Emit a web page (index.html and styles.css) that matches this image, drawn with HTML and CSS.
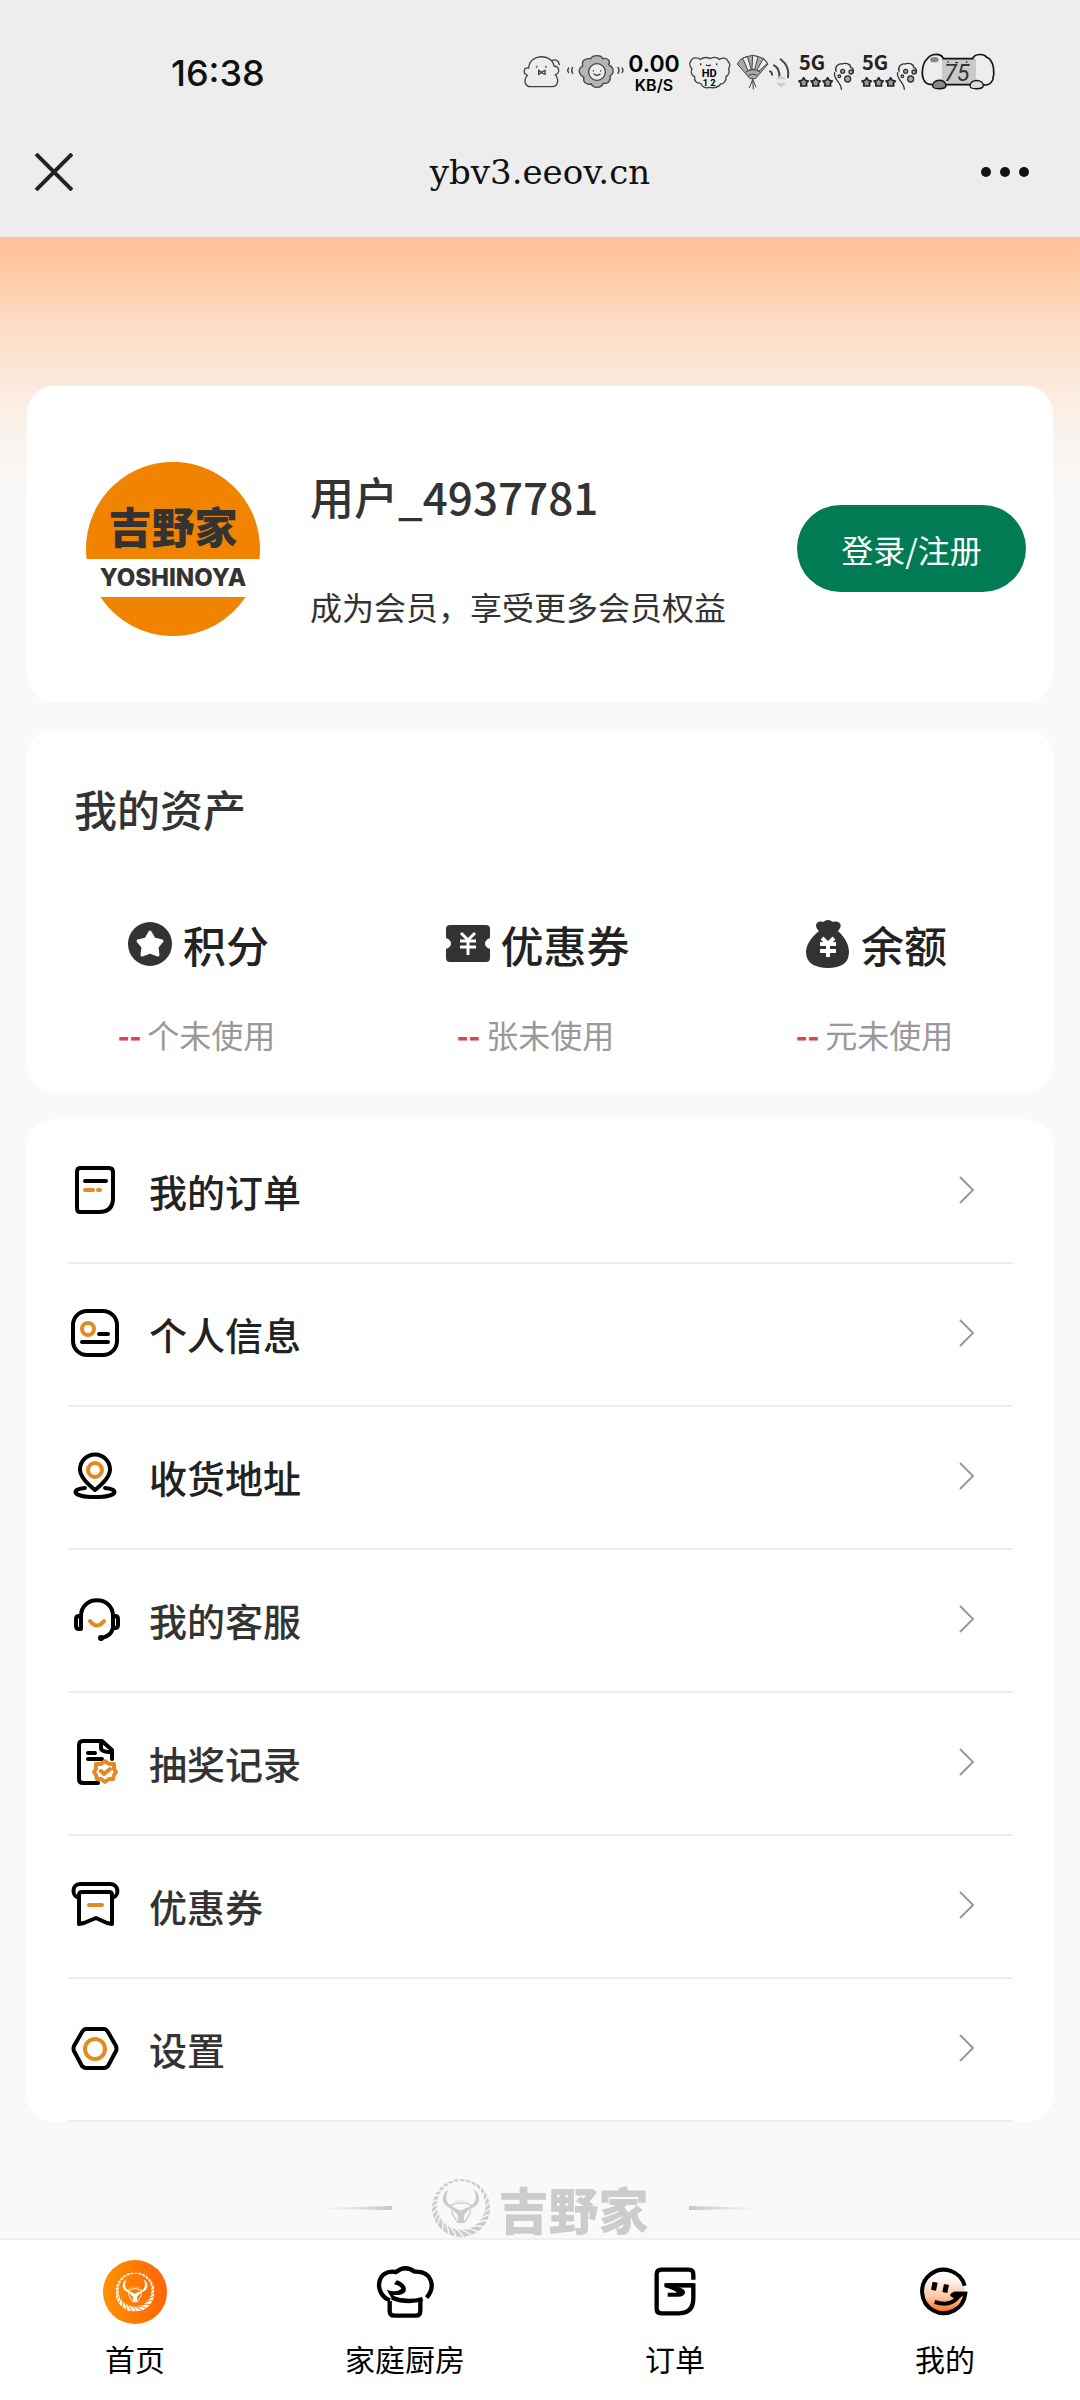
FILE: index.html
```html
<!DOCTYPE html>
<html lang="zh-CN">
<head>
<meta charset="utf-8">
<meta name="viewport" content="width=device-width, initial-scale=1">
<title>我的</title>
<link rel="stylesheet" href="styles.css">
</head>
<body>
<svg class="defs" aria-hidden="true">
  <defs>
    <path id="cut" d="M74 -6Q84 14 106 28"/>
    <mask id="rope" maskUnits="userSpaceOnUse" x="0" y="0" width="170" height="170">
      <rect width="170" height="170" fill="#fff"/>
      <g fill="none" stroke="#000" stroke-width="4">
        <use href="#cut"/><use href="#cut" transform="rotate(12 85 85)"/><use href="#cut" transform="rotate(24 85 85)"/><use href="#cut" transform="rotate(36 85 85)"/><use href="#cut" transform="rotate(48 85 85)"/><use href="#cut" transform="rotate(60 85 85)"/><use href="#cut" transform="rotate(72 85 85)"/><use href="#cut" transform="rotate(84 85 85)"/><use href="#cut" transform="rotate(96 85 85)"/><use href="#cut" transform="rotate(108 85 85)"/><use href="#cut" transform="rotate(120 85 85)"/><use href="#cut" transform="rotate(135 85 85)"/><use href="#cut" transform="rotate(150 85 85)"/><use href="#cut" transform="rotate(165 85 85)"/><use href="#cut" transform="rotate(180 85 85)"/><use href="#cut" transform="rotate(195 85 85)"/><use href="#cut" transform="rotate(210 85 85)"/><use href="#cut" transform="rotate(225 85 85)"/><use href="#cut" transform="rotate(240 85 85)"/><use href="#cut" transform="rotate(252 85 85)"/><use href="#cut" transform="rotate(264 85 85)"/><use href="#cut" transform="rotate(276 85 85)"/><use href="#cut" transform="rotate(288 85 85)"/><use href="#cut" transform="rotate(300 85 85)"/><use href="#cut" transform="rotate(312 85 85)"/><use href="#cut" transform="rotate(324 85 85)"/><use href="#cut" transform="rotate(336 85 85)"/><use href="#cut" transform="rotate(348 85 85)"/>
      </g>
    </mask>
    <symbol id="bull" viewBox="0 0 170 170">
      <path mask="url(#rope)" fill="currentColor" fill-rule="evenodd" d="M85 0a85 85 0 1 1 0 170a85 85 0 1 1 0-170ZM85 6a71 71 0 1 0 0 142a71 71 0 1 0 0-142Z"/>
      <path fill="currentColor" d="M49 30C24 44 26 78 56 86L57 78C42 72 36 50 49 30ZM121 30C146 44 144 78 114 86L113 78C128 72 134 50 121 30Z"/>
      <path fill="none" stroke="currentColor" stroke-width="4" d="M57 76Q85 64 113 76L111 102L95 127H75L59 102Z"/>
      <path fill="currentColor" d="M58 80L83 93L112 80L110 88L94 106V128H76V106L60 90Z"/>
      <path fill="none" stroke="currentColor" stroke-width="3" stroke-dasharray="3 4" d="M62 68Q85 60 109 68"/>
    </symbol>
    <symbol id="chevron" viewBox="0 0 16 28"><path d="M1 1L14 14L1 27" fill="none" stroke="#999" stroke-width="2"/></symbol>
    <symbol id="signal" viewBox="894 66 174 126">
      <text x="897" y="119" font-size="60" font-weight="700" fill="#222">5G</text>
      <g fill="#999" stroke="#222" stroke-width="5" stroke-linejoin="round">
        <path id="star" d="M911 143l5 8l9 2l-6 7l1 8h-18l1-8l-6-7l9-2Z"/>
        <use href="#star" x="36"/><use href="#star" x="72"/>
      </g>
      <g fill="none" stroke="#333" stroke-width="4" stroke-linecap="round">
        <path d="M1004 128c-6 18 20 28 20 50M1008 124c-4-14 6-24 18-22c8-4 26-2 26 10c10 2 10 14 6 18"/>
        <circle cx="1028" cy="124" r="6" fill="#aaa"/><circle cx="1053" cy="126" r="6" fill="#aaa"/><circle cx="1018" cy="139" r="4"/><circle cx="1043" cy="147" r="9" fill="#aaa"/>
      </g>
    </symbol>
  </defs>
</svg>

<header class="chrome">
  <div class="status">
    <time class="clock">16:38</time>
    <div class="indicators">
      <svg width="38" height="42" viewBox="69 66 114 126" aria-hidden="true" fill="none" stroke="#444" stroke-width="4" stroke-linecap="round">
        <path d="M86 114C88 70 156 70 162 108C180 110 180 130 166 134C178 150 174 170 156 170H92C74 170 70 150 82 136C68 132 70 110 86 114ZM156 92C166 86 176 92 178 104M116 121l8 6l11-6v12l-11-5l-8 5Z"/>
        <circle cx="110" cy="110" r="1"/><circle cx="138" cy="110" r="1"/>
      </svg>
      <svg width="56" height="42" viewBox="198 66 168 126" aria-hidden="true" fill="none" stroke="#444" stroke-width="4" stroke-linecap="round">
        <path fill="#b5b5b5" d="M272 86c6-12 32-12 36 0c16-4 24 8 18 18c16 8 18 26 4 34c4 16-8 24-20 22c-8 16-30 16-36 2c-18 4-26-8-22-20c-16-8-20-26-4-34c-4-16 8-24 24-22Z"/>
        <circle cx="291" cy="126" r="25" fill="#eee"/><path d="M282 132q9 8 18 0M280 122v1M302 122v1M218 112q-6 9 0 18M206 114q-6 7 0 14M354 112q6 9 0 18M366 114q6 7 0 14"/>
      </svg>
      <div class="netspeed"><b>0.00</b><span>KB/S</span></div>
      <svg class="glyph" width="46" height="42" viewBox="558 66 138 126" role="img" aria-label="HD 1 2">
        <path fill="none" stroke="#444" stroke-width="4" d="M574 90c6-10 22-6 26-2c14-8 24-6 30-2c12-6 22-4 28 2c14-8 24-2 26 6c10 10 4 18 2 22c4 12-2 20-8 24c2 14-8 22-16 22c-10 14-24 12-34 10c-12 4-22-2-26-12c-14 0-20-8-18-20c-12-4-12-18-8-24c-8-8-8-18-2-26Z"/>
        <path fill="none" stroke="#333" stroke-width="4" d="M602 100v6M650 100v6M618 104q8 6 14 0"/>
        <text x="605" y="141" font-size="33" font-weight="700">HD</text><text x="608" y="168" font-size="28" font-weight="700">1 2</text>
      </svg>
      <svg width="56" height="42" viewBox="711 66 168 126" aria-hidden="true" stroke="#444" stroke-width="3" stroke-linejoin="round">
        <path fill="#aaa" d="M712 102L722 88L740 80L758 76L776 80L792 86L804 102L766 146H750Z"/>
        <path fill="#eee" d="M728 84L742 80L754 118L744 122ZM758 76L774 80L764 118H756ZM790 86L802 100L776 124L772 118Z"/>
        <path fill="none" d="M738 126q20-14 42 0M746 136q12-8 26 0M758 148l-10 26M758 148l2 30M758 148l10 24"/>
        <g fill="none" stroke-width="6" stroke-linecap="round"><path d="M810 124q6 2 6 10M822 106q18 10 16 34M842 88q28 22 22 54"/></g>
        <path fill="#ccc" stroke="none" d="M828 148l15-13l15 13ZM828 158h30l-15 15Z"/>
      </svg>
      <svg class="glyph" width="58" height="42" role="img" aria-label="5G"><use href="#signal"/></svg>
      <svg class="glyph" width="58" height="42" role="img" aria-label="5G"><use href="#signal"/></svg>
      <svg class="glyph" width="72" height="42" viewBox="1272 66 216 126" role="img" aria-label="75">
        <path d="M1326 86H1428V166H1326Z" fill="#c9c9c9"/>
        <path fill="none" stroke="#111" stroke-width="5" d="M1330 86H1418C1424 70 1452 70 1460 82C1484 92 1484 130 1478 150C1470 166 1456 166 1448 164H1300C1264 166 1264 130 1270 106C1274 90 1284 84 1290 78C1306 70 1326 72 1330 86Z"/>
        <ellipse cx="1303" cy="89" rx="13" ry="8" fill="#888"/>
        <path fill="#888" stroke="#111" stroke-width="4" d="M1298 168c-2-22 40-24 40 0c-2 10-38 12-40 0Z"/><path fill="#ddd" stroke="#111" stroke-width="4" d="M1410 168c0-22 40-22 40 0c-2 10-38 12-40 0Z"/>
        <path stroke="#222" stroke-width="4" d="M1342 96h4M1398 96h4M1366 98h8"/>
        <text x="1332" y="154" font-size="70" font-style="italic" fill="#333">75</text>
      </svg>
    </div>
  </div>
  <div class="titlebar">
    <button class="icon-btn close" type="button" aria-label="关闭"><svg width="38" height="38" viewBox="0 0 38 38"><path d="M1 1L37 37M37 1L1 37" stroke="#222" stroke-width="4"/></svg></button>
    <h1 class="site">ybv3.eeov.cn</h1>
    <button class="icon-btn" type="button" aria-label="更多"><svg width="50" height="12" viewBox="0 0 50 12" fill="#111"><circle cx="6" cy="6" r="5"/><circle cx="25" cy="6" r="5"/><circle cx="44" cy="6" r="5"/></svg></button>
  </div>
</header>

<main class="page">
  <section class="card profile">
    <svg class="avatar" width="174" height="174" viewBox="0 0 174 174" role="img" aria-label="吉野家 YOSHINOYA">
      <path fill="#f08300" d="M0.600 97A87 87 0 1 1 173.400 97ZM14.400 135H159.600A87 87 0 0 1 14.400 135Z"/>
      <text class="avatar-cn" x="87" y="82" text-anchor="middle">吉野家</text>
      <text class="avatar-en" x="87" y="124" text-anchor="middle">YOSHINOYA</text>
    </svg>
    <div class="who">
      <h2 class="name">用户_4937781</h2>
      <p class="pitch">成为会员，享受更多会员权益</p>
    </div>
    <button class="login" type="button">登录/注册</button>
  </section>

  <section class="card assets">
    <h2 class="assets-title">我的资产</h2>
    <div class="asset-grid">
      <a class="asset" href="#points">
        <span class="asset-name"><svg width="43" height="48" viewBox="0 0 43 48" aria-hidden="true"><circle cx="22" cy="24" r="22" fill="#333"/><path fill="#fff" stroke="#fff" stroke-width="3" stroke-linejoin="round" d="M22 12l4 7l8 2l-5 6l1 8l-8-3l-8 3l1-8l-5-6l8-2Z"/></svg>积分</span>
        <span class="asset-note"><b>--</b>个未使用</span>
      </a>
      <a class="asset" href="#coupons">
        <span class="asset-name"><svg width="43" height="48" viewBox="0 0 43 48" aria-hidden="true"><path fill="#333" d="M4 5H40Q44 5 44 9V18Q39 20 39 23.500Q39 27 44 29V38Q44 42 40 42H4Q0 42 0 38V29Q5 27 5 23.500Q5 20 0 18V9Q0 5 4 5Z"/><path d="M15 13l7 7l7-7M14 21H30M14 27H30M22 20V35" fill="none" stroke="#fff" stroke-width="3"/></svg>优惠券</span>
        <span class="asset-note"><b>--</b>张未使用</span>
      </a>
      <a class="asset" href="#balance">
        <span class="asset-name"><svg width="43" height="48" viewBox="0 0 43 48" aria-hidden="true"><path fill="#333" d="M13 11C7 6 11 0 17 2Q22-2 27 2C33 0 38 5 32 11C40 18 43 26 43 32C43 43 35 48 22 48S0 43 0 32C0 26 4 18 13 11Z"/><path d="M16 18l6 6l6-6M14 24H30M14 31H30M22 24V37" fill="none" stroke="#fff" stroke-width="4"/></svg>余额</span>
        <span class="asset-note"><b>--</b>元未使用</span>
      </a>
    </div>
  </section>

  <ul class="card menu">
    <li><a class="row strong" href="#orders"><svg class="ico" viewBox="0 0 48 48" aria-hidden="true"><path d="M9 2H38Q42 2 42 6V32Q42 46 28 46H9Q6 46 6 42V6Q6 2 9 2ZM14 15H35"/><path class="hot" d="M14 24H22M27 24H29"/></svg><span>我的订单</span><svg class="chev"><use href="#chevron"/></svg></a></li>
    <li><a class="row strong" href="#profile"><svg class="ico" viewBox="0 0 48 48" aria-hidden="true"><rect x="2" y="2" width="44" height="44" rx="14"/><path d="M28 25H37M11 33H37"/><circle class="hot" cx="17" cy="20" r="6"/></svg><span>个人信息</span><svg class="chev"><use href="#chevron"/></svg></a></li>
    <li><a class="row strong" href="#address"><svg class="ico" viewBox="0 0 48 48" aria-hidden="true"><path d="M24 38C14 30 9 24 9 17.500A15 15 0 0 1 39 17.500C39 24 34 30 24 38ZM14 36C0 37 0 45 24 45S48 37 34 36"/><circle class="hot" cx="24" cy="18" r="7"/></svg><span>收货地址</span><svg class="chev"><use href="#chevron"/></svg></a></li>
    <li><a class="row" href="#service"><svg class="ico" viewBox="0 0 48 48" aria-hidden="true"><path d="M10 21C10 0 42 0 42 21M10 21H8Q5 21 5 24V31Q5 34 8 34H10ZM42 21H44Q47 21 47 24V30Q47 33 44 33H42ZM42 33Q40 41 31 43"/><circle cx="30" cy="43" r="1"/><path class="hot" d="M19 26Q26 35 33 26"/></svg><span>我的客服</span><svg class="chev"><use href="#chevron"/></svg></a></li>
    <li><a class="row" href="#draws"><svg class="ico" viewBox="0 0 48 48" aria-hidden="true"><path d="M27 45H12Q8 45 8 41V7Q8 3 12 3H31L41 12V21M30 4V10Q30 14 41 14M17 15H24M17 21H31"/><path class="hot" d="M34 23L38 26L43 26L43 31L45 34L43 37L42 41L38 41L34 44L30 41L26 41L25 37L23 34L25 31L25 26L30 26ZM30 33L33 36L39 31"/></svg><span>抽奖记录</span><svg class="chev"><use href="#chevron"/></svg></a></li>
    <li><a class="row" href="#vouchers"><svg class="ico" viewBox="0 0 48 48" aria-hidden="true"><path d="M8 17C0 15 1 3 9 3H39C48 3 49 15 41 17M8 43V14Q8 11 11 11H38Q41 11 41 14V43L36 42L25 37L13 42Z"/><path class="hot" d="M18 24H31"/></svg><span>优惠券</span><svg class="chev"><use href="#chevron"/></svg></a></li>
    <li><a class="row" href="#settings"><svg class="ico" viewBox="0 0 48 48" aria-hidden="true"><path d="M15 5H33Q35 5 37 8L45 22Q46 25 45 27L37 42Q35 44 33 44H15Q13 44 11 42L3 27Q2 25 3 22L11 8Q13 5 15 5Z"/><circle class="hot" cx="24" cy="25" r="10"/></svg><span>设置</span><svg class="chev"><use href="#chevron"/></svg></a></li>
  </ul>

  <div class="brand">
    <svg width="72" height="5" viewBox="0 0 72 5" aria-hidden="true"><defs><linearGradient id="fade"><stop offset="0" stop-color="#ccc" stop-opacity="0"/><stop offset="1" stop-color="#c4c4c4"/></linearGradient></defs><path fill="url(#fade)" d="M0 2L72 0V4L0 3Z"/></svg>
    <span class="brand-mark"><svg width="58" height="58" aria-hidden="true"><use href="#bull"/></svg><span class="brand-name">吉野家</span></span>
    <svg class="flip" width="72" height="5" viewBox="0 0 72 5" aria-hidden="true"><path fill="url(#fade)" d="M0 2L72 0V4L0 3Z"/></svg>
  </div>
</main>

<nav class="tabs">
  <a href="#home"><svg viewBox="0 0 192 192" aria-hidden="true"><defs><linearGradient id="sun"><stop offset="0" stop-color="#ff9100"/><stop offset="1" stop-color="#ff6408"/></linearGradient></defs><circle cx="96" cy="96" r="96" fill="url(#sun)"/><use href="#bull" x="37" y="37" width="118" height="118" color="#fff"/></svg>首页</a>
  <a href="#kitchen"><svg viewBox="939 91 192 192" aria-hidden="true" fill="none" stroke="#000" stroke-width="13"><path d="M990 212C940 194 948 116 1008 127Q1036 105 1064 126C1116 124 1128 170 1100 204M989 214V244Q989 258 1003 258H1068Q1081 258 1081 244V210M996 204Q1040 222 1088 208"/><path fill="#000" stroke="none" d="M1010 152C1030 158 1042 172 1036 186Q1028 198 1000 196L1012 210L996 208L980 180Q1008 190 1024 178Q1022 168 1002 164Z"/></svg>家庭厨房</a>
  <a href="#orders"><svg viewBox="251 91 192 192" aria-hidden="true" fill="none" stroke="#000" stroke-width="13"><path d="M402 150V133Q402 120 388 120H306Q292 120 292 134V238Q292 251 306 251H360Q402 250 402 206V167H320"/><path fill="#000" stroke="none" d="M315 161H402V173H358Q378 178 377 190Q374 201 356 201H325V189H352Q350 183 315 172Z"/></svg>订单</a>
  <a href="#me"><svg viewBox="1059 91 192 192" aria-hidden="true"><defs><linearGradient id="face" x2="0" y2="1"><stop offset=".15" stop-color="#fff"/><stop offset=".65" stop-color="#ffc29c"/><stop offset="1" stop-color="#ff6a1c"/></linearGradient></defs><circle cx="1150" cy="185" r="64" fill="url(#face)"/><path fill="none" stroke="#000" stroke-width="12" d="M1214 168A65 65 0 1 0 1216 192H1180"/><path fill="none" stroke="#000" stroke-width="12" d="M1124 217Q1170 232 1194 203"/><path d="M1118 156l15 3l-5 24l-15-3ZM1152 163l15 3l-5 24l-15-3ZM1222 186H1184Q1166 192 1172 200L1192 212Z"/></svg>我的</a>
</nav>
</body>
</html>
```
FILE: styles.css
```css
* { box-sizing: border-box; }
body {
  margin: 0;
  min-height: 100vh;
  display: flex;
  flex-direction: column;
  background: #f9f9f9;
  color: #333;
  font-family: "Noto Sans CJK SC", "Noto Sans", sans-serif;
  font-size: 32px;
}
h1, h2, p, ul { margin: 0; padding: 0; font-weight: inherit; }
a { color: inherit; text-decoration: none; }
button { border: 0; padding: 0; background: none; font: inherit; color: inherit; cursor: pointer; }
.defs { position: absolute; width: 0; height: 0; }

/* system bar and browser title */
.chrome { background: #ededed; color: #111; }
.status {
  display: flex;
  justify-content: space-between;
  align-items: center;
  height: 106px;
  padding: 40px 84px 0 171px;
}
.clock { font: 500 36px/40px Inter, sans-serif; }
.indicators { display: flex; gap: 5px; align-items: center; }
.indicators svg { overflow: visible; flex: none; }
.glyph text { font-family: Roboto, sans-serif; }
.netspeed {
  display: flex;
  flex-direction: column;
  align-items: center;
  width: 54px;
  font: 600 16px/18px Inter, sans-serif;
  color: #000;
}
.netspeed b { font-size: 23px; line-height: 24px; font-weight: 600; }
.titlebar {
  display: flex;
  justify-content: space-between;
  align-items: center;
  height: 131px;
  padding: 0 50px 0 35px;
}
.icon-btn { width: 50px; height: 50px; display: flex; align-items: center; }
.close { width: 65px; }
.site { font: 34px/44px "DejaVu Serif", serif; }

/* page body */
.page {
  flex: 1;
  display: flex;
  flex-direction: column;
  gap: 27px;
  padding: 149px 27px 0;
  background: linear-gradient(#ffc096 0, #ffceab 46px, #fedcc5 85px, #fceade 150px, #f9f3ee 200px, #f9f9f9 270px);
}
.card { background: #fff; border-radius: 27px; }

.profile { display: flex; align-items: center; height: 316px; padding: 9px 27px 0 59px; }
.avatar { flex: none; }
.avatar-cn { font: 900 43px "Noto Sans CJK JP", sans-serif; fill: #333; }
.avatar-en { font: 800 24px Inter, sans-serif; fill: #333; }
.who { flex: 1; padding: 0 0 4px 50px; }
.name { font-size: 44px; line-height: 64px; font-weight: 500; }
.pitch { margin-top: 54px; line-height: 48px; white-space: nowrap; }
.login {
  flex: none;
  width: 229px;
  height: 87px;
  border-radius: 44px;
  background: #007b53;
  color: #fff;
}

.assets { height: 363px; padding: 47px 9px 0 0; }
.assets-title { padding-left: 47px; font-size: 43px; line-height: 64px; font-weight: 500; }
.asset-grid { display: grid; grid-template-columns: repeat(3, 1fr); margin-top: 72px; }
.asset { display: flex; flex-direction: column; align-items: center; gap: 34px; }
.asset-name { display: flex; align-items: center; gap: 12px; padding-left: 4px; font-size: 43px; line-height: 64px; font-weight: 500; color: #222; }
.asset-name svg { overflow: visible; }
.asset-note { line-height: 48px; color: #999; }
.asset-note b { margin-right: 6px; font-weight: 700; color: #dd4450; }

.menu { list-style: none; padding: 2px 40px 0 41px; }
.row {
  display: flex;
  align-items: center;
  gap: 30px;
  height: 143px;
  padding: 0 38px 3px 3px;
  border-bottom: 2px solid #ededed;
  font-size: 38px;
  font-weight: 500;
}
.row.strong { color: #222; }
.row span { flex: 1; }
.ico { width: 48px; height: 48px; overflow: visible; fill: none; stroke: #000; stroke-width: 4; stroke-linecap: round; stroke-linejoin: round; }
.hot { stroke: #e58a1f; }
.chev { width: 16px; height: 28px; }

.brand { display: flex; justify-content: center; align-items: center; gap: 40px; padding-top: 30px; color: #ccc; }
.brand-mark { display: flex; align-items: center; gap: 9px; }
.brand-name { font: 900 50px/58px "Noto Sans CJK JP", sans-serif; }
.flip { transform: scaleX(-1); }

/* bottom tabs */
.tabs {
  position: sticky;
  bottom: 0;
  display: grid;
  grid-template-columns: repeat(4, 1fr);
  height: 162px;
  padding-top: 20px;
  border-top: 2px solid #f0f0f0;
  background: #fff;
  color: #000;
}
.tabs a { display: flex; flex-direction: column; align-items: center; gap: 12px; font-size: 30px; line-height: 44px; }
.tabs svg { width: 64px; height: 64px; flex: none; }
```
